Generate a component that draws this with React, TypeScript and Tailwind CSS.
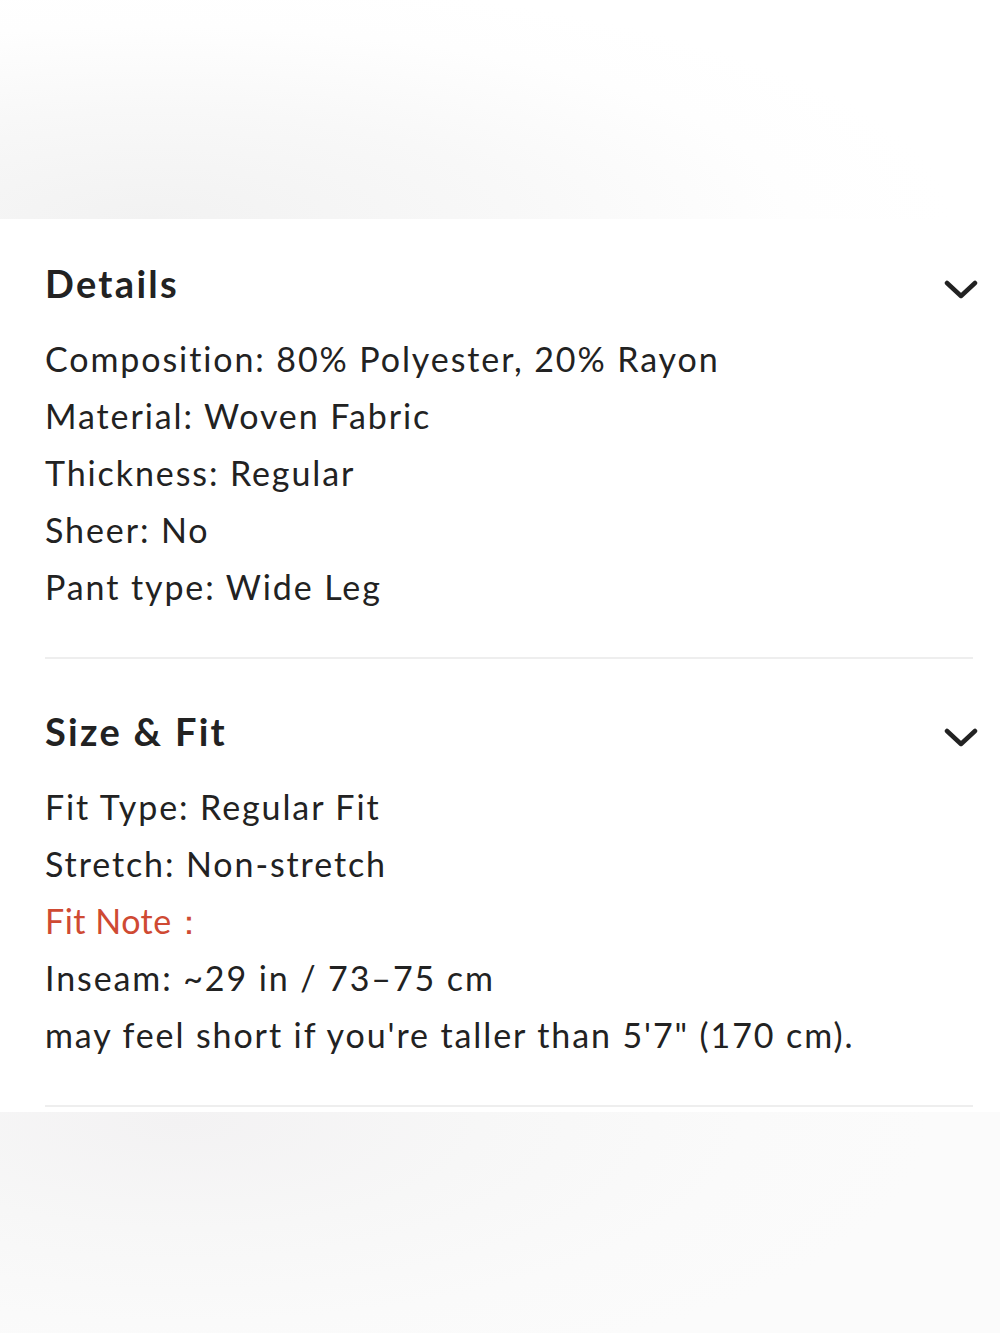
import { ReactNode } from "react";

function Chevron() {
  return (
    <svg width="34" height="20" viewBox="0 0 34 20" className="text-[#222]">
      <polyline
        points="3,4 17,17 31,4"
        fill="none"
        stroke="currentColor"
        strokeWidth="4.5"
        strokeLinecap="round"
        strokeLinejoin="round"
      />
    </svg>
  );
}

function Section({ title, children, top }: { title: string; children: ReactNode; top: string }) {
  return (
    <section className={top}>
      <div className="flex items-center justify-between pr-[22px]">
        <h2 className="-mt-[2px] mb-[2px] text-[38px] font-bold leading-[48px] tracking-[2.3px] text-[#222]">{title}</h2>
        <div className="mt-[8px]">
          <Chevron />
        </div>
      </div>
      <div className="mt-[21px] text-[34px] leading-[57px] tracking-[1.9px] text-[#222]">{children}</div>
      <div className="mr-[27px] mt-[42px] h-[2px] bg-[#eeeeee]" />
    </section>
  );
}

export default function App() {
  return (
    <div className="flex min-h-[1333px] w-[1000px] flex-col bg-white font-['Lato','Noto_Sans',sans-serif]">
      <div className="h-[219px] bg-[radial-gradient(ellipse_80%_110%_at_15%_100%,#f2f2f2_0%,#f8f8f8_45%,#fefefe_80%,#ffffff_100%)]" />
      <div className="pl-[45px] pb-[5px]">
        <Section title="Details" top="pt-[42px]">
          <p>Composition: 80% Polyester, 20% Rayon</p>
          <p>Material: Woven Fabric</p>
          <p>Thickness: Regular</p>
          <p>Sheer: No</p>
          <p>Pant type: Wide Leg</p>
        </Section>
        <Section title="Size & Fit" top="pt-[50px]">
          <p>Fit Type: Regular Fit</p>
          <p>Stretch: Non-stretch</p>
          <p className="tracking-[0.5px] text-[#cf4a33]">Fit Note：</p>
          <p>Inseam: ~29 in / 73–75 cm</p>
          <p>may feel short if you're taller than 5'7" (170 cm).</p>
        </Section>
      </div>
      <div className="flex-1 bg-[radial-gradient(ellipse_75%_120%_at_18%_5%,#f3f2f3_0%,#f7f7f7_40%,#fafafa_75%,#fbfbfb_100%)]" />
    </div>
  );
}
